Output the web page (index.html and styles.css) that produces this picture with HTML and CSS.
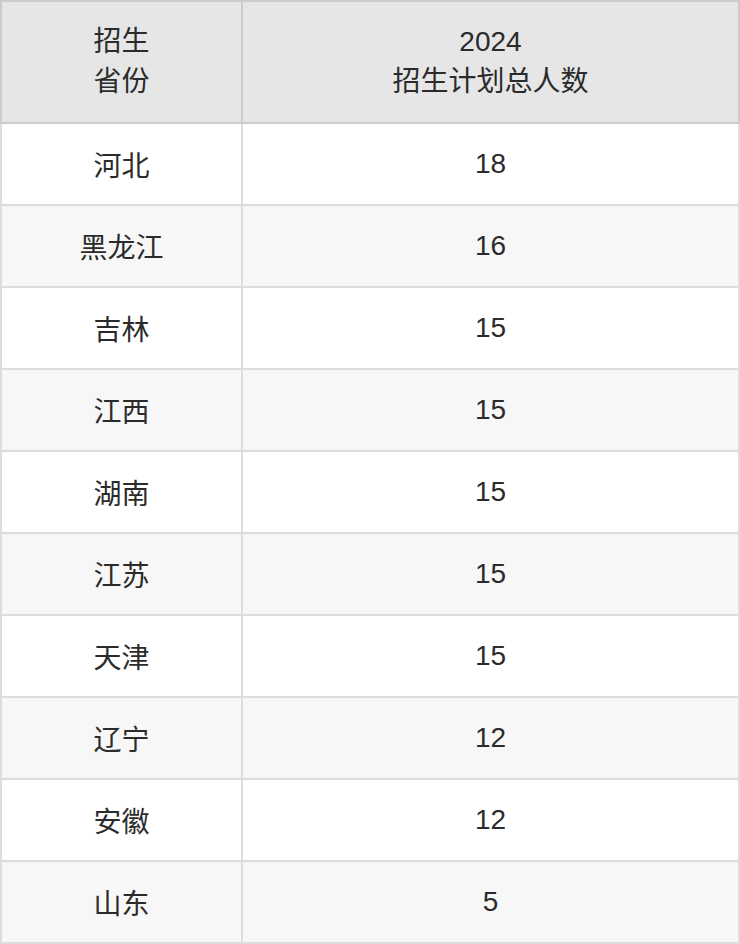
FILE: index.html
```html
<!DOCTYPE html>
<html lang="zh-CN">
<head>
<meta charset="utf-8">
<title>招生计划</title>
<link rel="stylesheet" href="styles.css">
</head>
<body>
<div class="table">
  <div class="head">
    <div class="cell">招生<br>省份</div>
    <div class="cell">2024<br>招生计划总人数</div>
  </div>
  <div class="body">
    <div class="cell">河北</div><div class="cell">18</div>
    <div class="cell alt">黑龙江</div><div class="cell alt">16</div>
    <div class="cell">吉林</div><div class="cell">15</div>
    <div class="cell alt">江西</div><div class="cell alt">15</div>
    <div class="cell">湖南</div><div class="cell">15</div>
    <div class="cell alt">江苏</div><div class="cell alt">15</div>
    <div class="cell">天津</div><div class="cell">15</div>
    <div class="cell alt">辽宁</div><div class="cell alt">12</div>
    <div class="cell">安徽</div><div class="cell">12</div>
    <div class="cell alt">山东</div><div class="cell alt">5</div>
  </div>
</div>
</body>
</html>
```
FILE: styles.css
```css
html, body {
  margin: 0;
  padding: 0;
  background: #ffffff;
}
body {
  font-family: "Liberation Sans", "Noto Sans CJK SC", sans-serif;
  font-size: 28px;
  color: #2b2b2b;
}
.table {
  width: 740px;
}
.head {
  display: grid;
  grid-template-columns: 239px 495px;
  column-gap: 2px;
  padding: 2px;
  background: #cccccc;
}
.head .cell {
  height: 120px;
  background: #e6e6e6;
  line-height: 40px;
}
.body {
  display: grid;
  grid-template-columns: 239px 495px;
  gap: 2px;
  padding: 0 2px 2px 2px;
  background: #dddddd;
}
.body .cell {
  height: 80px;
  background: #ffffff;
}
.body .cell.alt {
  background: #f7f7f7;
}
.cell {
  display: flex;
  align-items: center;
  justify-content: center;
  text-align: center;
}
```
